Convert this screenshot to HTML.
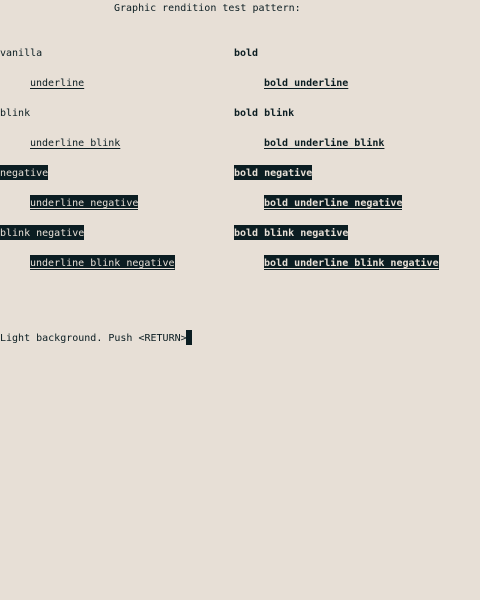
<!DOCTYPE html>
<html><head><meta charset="utf-8"><style>
html,body{margin:0;padding:0;width:480px;height:600px;background:#e7dfd6;overflow:hidden}
.l{position:absolute;height:14px;padding-top:1px;line-height:15px;font-family:"DejaVu Sans Mono","Liberation Mono",monospace;font-size:10px;color:#0b1d22;white-space:pre}
.b{font-weight:bold}
.u{text-decoration:underline;text-underline-offset:2px}
.n{background:#0b1d22;color:#e7dfd6}
</style></head><body>
<div class="l" style="top:0;left:114px">Graphic rendition test pattern:</div>
<div class="l" style="top:45px;left:0">vanilla</div>
<div class="l b" style="top:45px;left:234px">bold</div>
<div class="l u" style="top:75px;left:30px">underline</div>
<div class="l b u" style="top:75px;left:264px">bold underline</div>
<div class="l" style="top:105px;left:0">blink</div>
<div class="l b" style="top:105px;left:234px">bold blink</div>
<div class="l u" style="top:135px;left:30px">underline blink</div>
<div class="l b u" style="top:135px;left:264px">bold underline blink</div>
<div class="l n" style="top:165px;left:0">negative</div>
<div class="l b n" style="top:165px;left:234px">bold negative</div>
<div class="l u n" style="top:195px;left:30px">underline negative</div>
<div class="l b u n" style="top:195px;left:264px">bold underline negative</div>
<div class="l n" style="top:225px;left:0">blink negative</div>
<div class="l b n" style="top:225px;left:234px">bold blink negative</div>
<div class="l u n" style="top:255px;left:30px">underline blink negative</div>
<div class="l b u n" style="top:255px;left:264px">bold underline blink negative</div>
<div class="l" style="top:330px;left:0">Light background. Push &lt;RETURN&gt;</div>
<div style="position:absolute;top:330px;left:186px;width:6px;height:15px;background:#0b1d22"></div>
</body></html>
